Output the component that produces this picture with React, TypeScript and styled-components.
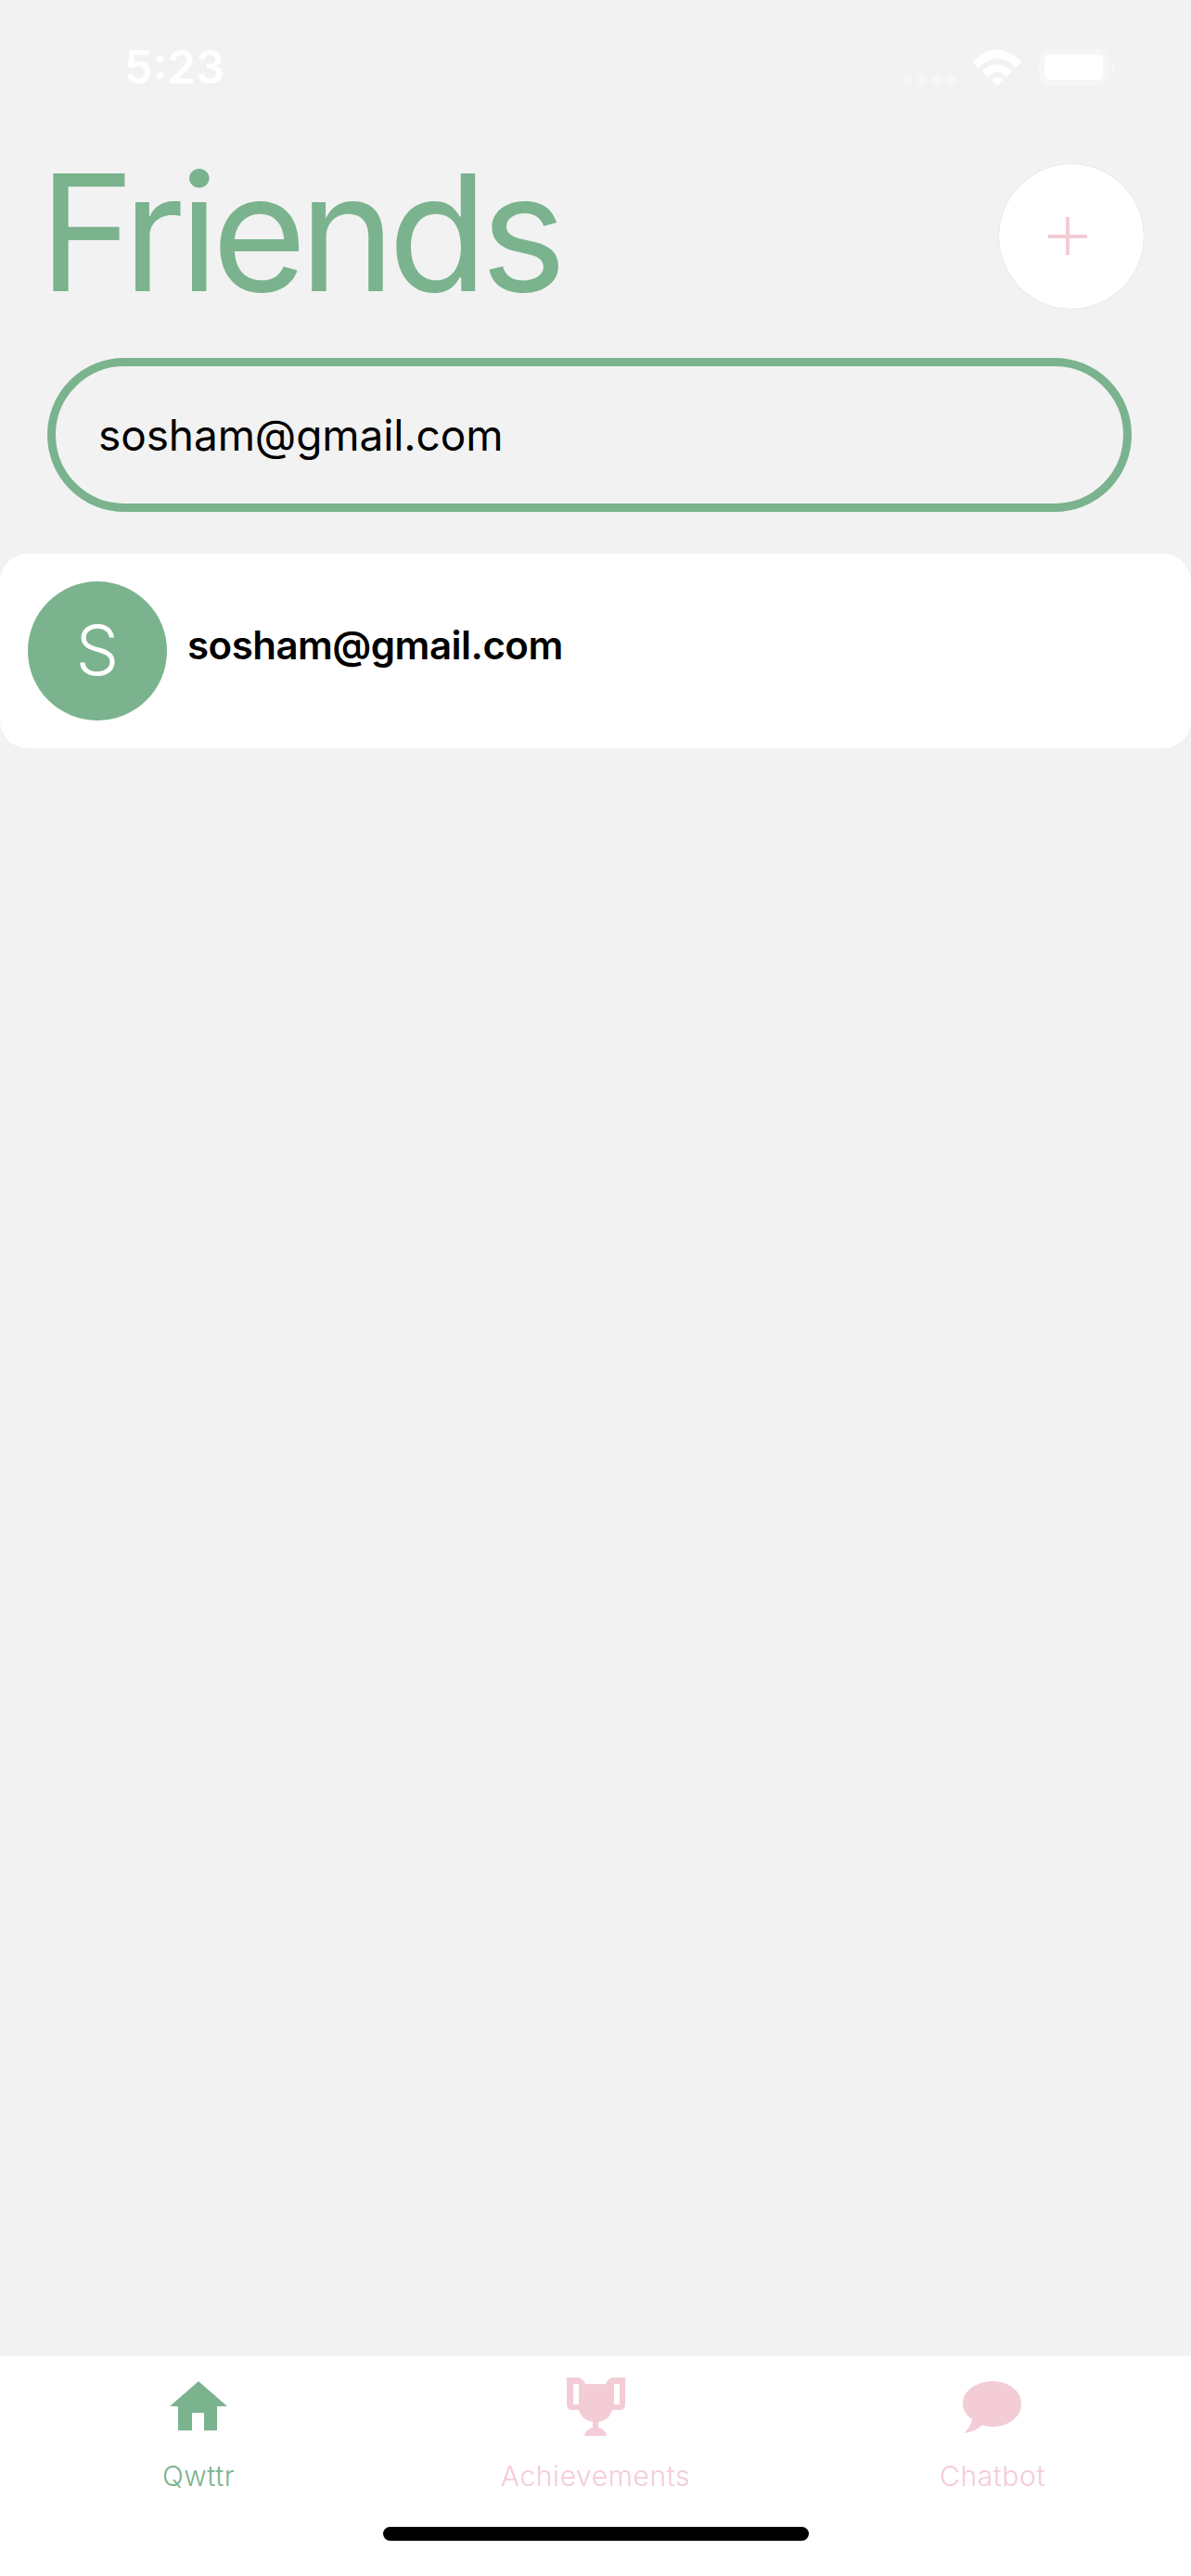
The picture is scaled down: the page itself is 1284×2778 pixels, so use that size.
import * as React from 'react';
import styled, { createGlobalStyle } from 'styled-components';

const GREEN = '#7ab38d';
const PINK = '#f4ccd6';
const EMAIL = 'sosham@gmail.com';

const GlobalStyle = createGlobalStyle`
  html, body {
    margin: 0;
    padding: 0;
    background: #f2f2f2;
  }
  * {
    box-sizing: border-box;
  }
`;

const tabs = [
  { label: 'Qwttr', active: true, icon: 'home' },
  { label: 'Achievements', active: false, icon: 'trophy' },
  { label: 'Chatbot', active: false, icon: 'chat' },
];

const TabIcon = ({ name }: { name: string }) => {
  if (name === 'home') {
    return (
      <IconSvg viewBox="0 0 70 70">
        <path d="M35 5 L66 32 L55 32 L55 58 L41 58 L41 39 L28 39 L28 58 L13 58 L13 32 L4 32 Z" fill="currentColor" />
      </IconSvg>
    );
  }
  if (name === 'trophy') {
    return (
      <IconSvg viewBox="0 0 70 70">
        <path
          fillRule="evenodd"
          d="M4 1 L16 1 Q21 1 24 8 L46 8 Q49 1 54 1 L67 1 L67 30 Q67 36 61 36 L53 36 Q50 47 38 49 L38 55 Q46 57 47 64 L23 64 Q24 57 32 55 L32 49 Q20 47 17 36 L10 36 Q4 36 4 30 Z M11 8 L11 30 L17 30 L17 8 Z M55 8 L55 30 L61 30 L61 8 Z"
          fill="currentColor"
        />
      </IconSvg>
    );
  }
  return (
    <IconSvg viewBox="0 0 70 70">
      <path
        d="M35 5 C52 5 66 15 66 29 C66 44 52 54 35 54 C31 54 28 53.5 24 52 C18 58 11 60 4 61 C9 57 12 51 13 46 C7 42 3 36 3 29 C3 15 18 5 35 5 Z"
        fill="currentColor"
      />
    </IconSvg>
  );
};

export default function App() {
  return (
    <>
      <GlobalStyle />
      <Screen>
        <StatusBar>
          <Clock>5:23</Clock>
          <StatusIcons>
            <SignalDots>
              <Dot />
              <Dot />
              <Dot />
              <Dot />
            </SignalDots>
            <svg width="52" height="39" viewBox="0 0 52 39">
              <path d="M0 14 C15 -4 37 -4 52 14 L46 20 C33 7 19 7 6 20 Z" fill="#fff" />
              <path d="M10 24 C19 14 33 14 42 24 L36 30 C29 23 23 23 16 30 Z" fill="#fff" />
              <path d="M20 33 C24 29 28 29 32 33 L26 39 Z" fill="#fff" />
            </svg>
            <Battery>
              <BatteryFill />
            </Battery>
            <BatteryNub />
          </StatusIcons>
        </StatusBar>

        <Header>
          <Title>Friends</Title>
          <AddButton>
            <svg width="42" height="42" viewBox="0 0 42 42">
              <path d="M21 0 V41 M0 21 H42" stroke={PINK} strokeWidth="4" fill="none" />
            </svg>
          </AddButton>
        </Header>

        <SearchField>{EMAIL}</SearchField>

        <FriendCard>
          <Avatar>S</Avatar>
          <FriendEmail>{EMAIL}</FriendEmail>
        </FriendCard>

        <Spacer />

        <TabBar>
          <TabRow>
            {tabs.map((tab) => (
              <Tab key={tab.label} $active={tab.active}>
                <TabIcon name={tab.icon} />
                <TabLabel>{tab.label}</TabLabel>
              </Tab>
            ))}
          </TabRow>
          <HomeIndicator />
        </TabBar>
      </Screen>
    </>
  );
}

const Screen = styled.div`
  width: 1284px;
  height: 2778px;
  display: flex;
  flex-direction: column;
  background: #f2f2f2;
  font-family: Inter, 'Noto Sans', sans-serif;
  overflow: hidden;
`;

const StatusBar = styled.div`
  height: 177px;
  padding: 53px 82px 0 134px;
  display: flex;
  justify-content: space-between;
  align-items: flex-start;
`;

const Clock = styled.div`
  color: #fff;
  font-size: 49px;
  font-weight: 600;
  line-height: 40px;
`;

const StatusIcons = styled.div`
  display: flex;
  align-items: flex-end;
  height: 39px;
`;

const SignalDots = styled.div`
  display: flex;
  gap: 6px;
  margin-right: 18px;
`;

const Dot = styled.div`
  width: 10px;
  height: 11px;
  border-radius: 4px;
  background: #f6f6f6;
`;

const Battery = styled.div`
  width: 75px;
  height: 39px;
  margin-left: 19px;
  border: 6px solid #f6f6f6;
  border-radius: 12px;
  display: flex;
`;

const BatteryFill = styled.div`
  flex: 1;
  background: #fff;
  border-radius: 5px;
`;

const BatteryNub = styled.div`
  width: 4px;
  height: 12px;
  margin: 0 0 13px 3px;
  background: #f6f6f6;
  border-radius: 0 4px 4px 0;
`;

const Header = styled.div`
  height: 156px;
  padding: 0 51px 0 42px;
  display: flex;
  justify-content: space-between;
  align-items: flex-start;
`;

const Title = styled.div`
  color: ${GREEN};
  font-size: 175px;
  font-weight: 400;
  line-height: 156px;
  letter-spacing: -7.6px;
  margin-top: -5px;
`;

const AddButton = styled.div`
  width: 156px;
  height: 156px;
  border-radius: 50%;
  background: #fff;
  display: flex;
  align-items: center;
  justify-content: center;
  padding-right: 8px;
  box-shadow: 0 0 1px rgba(0, 0, 0, 0.2);
`;

const SearchField = styled.div`
  width: 1169px;
  height: 166px;
  margin: 53px 0 0 51px;
  padding: 0 46px;
  border: 9px solid ${GREEN};
  border-radius: 83px;
  display: flex;
  align-items: center;
  color: #000;
  font-size: 46px;
  font-weight: 400;
  letter-spacing: -0.1px;
`;

const FriendCard = styled.div`
  height: 210px;
  margin-top: 45px;
  padding: 0 30px;
  background: #fff;
  border-radius: 30px;
  display: flex;
  align-items: center;
  gap: 22px;
`;

const Avatar = styled.div`
  width: 150px;
  height: 150px;
  padding-bottom: 2px;
  border-radius: 50%;
  background: ${GREEN};
  color: #fff;
  font-size: 74px;
  font-weight: 350;
  display: flex;
  align-items: center;
  justify-content: center;
`;

const FriendEmail = styled.div`
  color: #000;
  font-size: 42px;
  font-weight: 600;
  letter-spacing: -0.5px;
  margin-bottom: 14px;
`;

const Spacer = styled.div`
  flex: 1;
`;

const TabBar = styled.div`
  height: 237px;
  background: #fff;
  display: flex;
  flex-direction: column;
  align-items: center;
`;

const TabRow = styled.div`
  width: 100%;
  display: grid;
  grid-template-columns: repeat(3, 428px);
  padding-top: 22px;
`;

const Tab = styled.div<{ $active: boolean }>`
  display: flex;
  flex-direction: column;
  align-items: center;
  color: ${(p) => (p.$active ? GREEN : PINK)};
`;

const IconSvg = styled.svg`
  width: 70px;
  height: 70px;
`;

const TabLabel = styled.div`
  margin-top: 19px;
  font-size: 30px;
  font-weight: 300;
  line-height: 36px;
  letter-spacing: 0.6px;
`;

const HomeIndicator = styled.div`
  width: 459px;
  height: 15px;
  margin-top: 37px;
  border-radius: 8px;
  background: #000;
`;
